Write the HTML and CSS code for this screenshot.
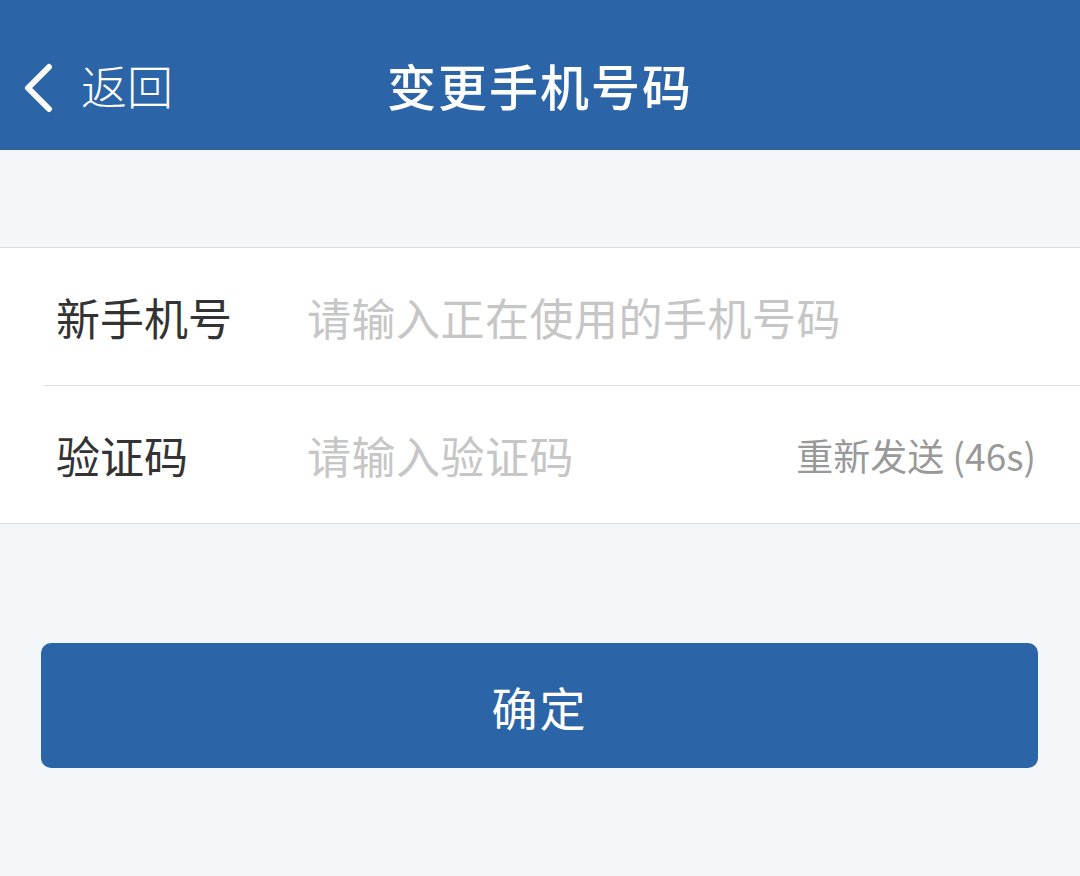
FILE: index.html
```html
<!DOCTYPE html>
<html lang="zh-CN">
<head>
<meta charset="utf-8">
<title>变更手机号码</title>
<link rel="stylesheet" href="styles.css">
</head>
<body>
<div class="page">
  <header class="topbar">
    <div class="back">
      <svg class="chev" width="34" height="50" viewBox="0 0 34 50"><path d="M28 4 L7 25 L28 46" fill="none" stroke="#fff" stroke-width="6" stroke-linecap="round" stroke-linejoin="round"/></svg>
      <span class="back-text">返回</span>
    </div>
    <h1 class="title">变更手机号码</h1>
  </header>
  <div class="spacer"></div>
  <section class="form">
    <div class="row row-first">
      <span class="label">新手机号</span>
      <span class="placeholder">请输入正在使用的手机号码</span>
    </div>
    <div class="row">
      <span class="label">验证码</span>
      <span class="placeholder">请输入验证码</span>
      <span class="resend">重新发送 (46s)</span>
    </div>
  </section>
  <div class="actions">
    <button class="confirm">确定</button>
  </div>
</div>
</body>
</html>
```
FILE: styles.css
```css
* { box-sizing: border-box; }
html, body { margin: 0; padding: 0; }
body {
  background: #f4f7f9;
  font-family: "Noto Sans CJK SC", "Noto Sans", sans-serif;
  width: 1080px;
  height: 876px;
  overflow: hidden;
}
.topbar {
  height: 150px;
  padding-top: 18px;
  background: #2b65a8;
  display: flex;
  align-items: center;
  position: relative;
  color: #fff;
}
.back {
  display: flex;
  align-items: center;
  padding-left: 21px;
  gap: 26px;
}
.chev { display: block; margin-top: 8px; }
.back-text {
  font-size: 46px;
  line-height: 1;
  font-weight: 300;
}
.title {
  position: absolute;
  left: 0; right: 0;
  margin: 0;
  text-align: center;
  font-size: 49px;
  font-weight: 500;
  letter-spacing: 2px;
  line-height: 1;
  pointer-events: none;
}
.spacer { height: 97px; }
.form {
  background: #fff;
  border-top: 1px solid #dcdcdc;
  border-bottom: 1px solid #dcdcdc;
}
.row {
  height: 137px;
  display: flex;
  align-items: center;
  padding-left: 56px;
  padding-right: 44px;
}
.row-first {
  margin-left: 44px;
  padding-left: 12px;
  border-bottom: 1px solid #dcdcdc;
  height: 138px;
}
.label {
  width: 251px;
  font-size: 44px;
  color: #333;
  font-weight: 400;
  flex: none;
}
.placeholder {
  font-size: 44px;
  color: #c6c6c6;
  flex: 1;
  letter-spacing: 0.5px;
}
.resend {
  font-size: 37px;
  color: #999;
}
.actions {
  padding: 119px 42px 0 41px;
}
.confirm {
  width: 100%;
  height: 125px;
  border: none;
  border-radius: 10px;
  background: #2b65a8;
  color: #fff;
  font-family: "Noto Sans CJK SC", "Noto Sans", sans-serif;
  font-size: 46px;
  letter-spacing: 2px;
}
```
